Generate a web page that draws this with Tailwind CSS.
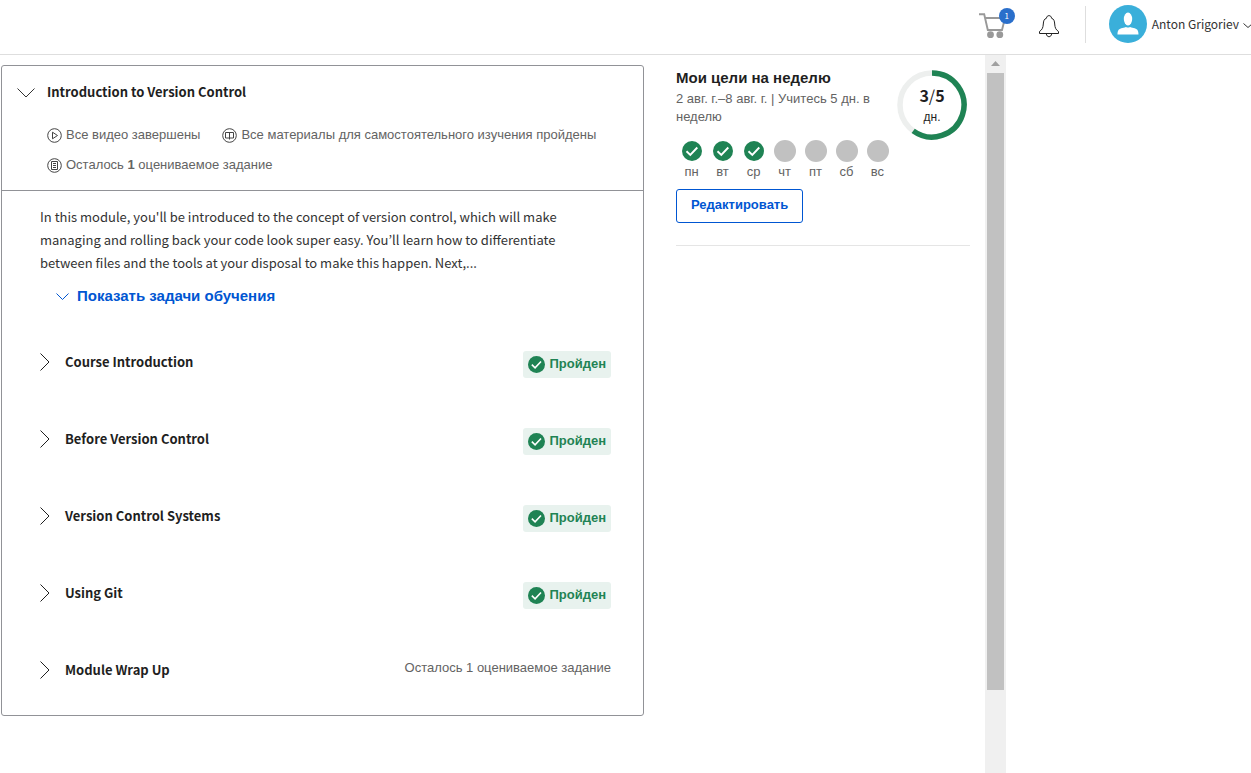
<!DOCTYPE html>
<html lang="ru">
<head>
<meta charset="utf-8">
<meta name="viewport" content="width=device-width, initial-scale=1">
<title>Introduction to Version Control</title>
<script src="https://cdn.jsdelivr.net/npm/@tailwindcss/browser@4"></script>
</head>
<body class="flex h-screen flex-col overflow-hidden bg-white font-['Liberation_Sans','Noto_Sans_CJK_KR',sans-serif] text-[13px] text-[#636363]">
<svg class="hidden" aria-hidden="true">
  <symbol id="check" viewBox="0 0 20 20"><circle cx="10" cy="10" r="10" fill="#1f8354"/><path d="M4.500 10.200l3.800 3.700 7-7.400" fill="none" stroke="#fff" stroke-width="1.900"/></symbol>
  <symbol id="right" viewBox="0 0 10 18"><path d="M.5.5L9 9 .5 17.500" fill="none" stroke="currentColor"/></symbol>
</svg>

<header class="flex h-[55px] shrink-0 items-start justify-end overflow-hidden border-b border-[#dedede]">
  <a href="#cart" aria-label="Корзина" class="relative mt-2 mr-6 h-8 w-9">
    <svg class="mt-1 h-[27px] w-[27px]" viewBox="0 0 27 27"><path d="M0 2.300h5.200l3.600 15.700H23l3-12H6" fill="none" stroke="#999" stroke-width="1.900"/><circle cx="11.500" cy="22.700" r="3.400" fill="#999"/><circle cx="20.800" cy="22.700" r="3.400" fill="#999"/></svg>
    <span class="absolute top-0 left-5 flex size-4 items-center justify-center rounded-full bg-[#2a6fcb] font-['Noto_Sans_CJK_KR',sans-serif] text-[8px] text-white">1</span>
  </a>
  <button type="button" aria-label="Уведомления" class="mt-[15px] mr-[26px]">
    <svg class="h-6 w-5" viewBox="0 0 20 24" fill="none" stroke="#222"><path d="M.5 18.500V16.500C3.500 14.500 4 12.500 4.300 9 4.500 6 5 4 7.500 3.200 7.500 -.2 12.500 -.2 12.500 3.200 15 4 15.500 6 15.700 9 16 12.500 16.500 14.500 19.500 16.500V18.500H.5zM7.300 18.500C7.500 22.800 12.500 22.800 12.700 18.500"/></svg>
  </button>
  <div class="mt-1.5 mr-[23px] h-[37px] w-px bg-[#dedede]"></div>
  <button type="button" class="mt-[5px] -mr-0.5 flex items-center text-[#333]">
    <svg class="size-[38px]" viewBox="0 0 38 38"><circle cx="19" cy="19" r="19" fill="#3aafda"/><ellipse cx="19" cy="14" rx="4.200" ry="6.400" fill="#fff"/><path d="M8.500 29.500c0-4.500 1.500-5.800 5-6.500q2.500-.5 3.500-1 2 1 4 0 1 .5 3.500 1c3.500.7 5 2 5 6.500z" fill="#fff"/></svg>
    <span class="ml-[5px] font-['Noto_Sans_CJK_KR',sans-serif] text-[12px] leading-5">Anton Grigoriev</span>
    <svg class="mt-0.5 ml-1 h-[5px] w-[10px]" viewBox="0 0 10 5" fill="none" stroke="#333"><path d="M.5.5L5 4.500 9.500.5"/></svg>
  </button>
</header>

<div class="mr-[245px] flex min-h-0 flex-1">
  <main class="min-w-0 flex-1 overflow-hidden pt-2.5 pl-px">
    <section class="rounded-[3px] border border-[#919297]">
      <div class="border-b border-[#919297] px-[15px] pt-4 pb-2.5">
        <h2>
          <button type="button" aria-expanded="true" class="flex items-center gap-3 font-['Noto_Sans_CJK_KR',sans-serif] text-[13px] leading-5 font-bold text-[#1f1f1f]">
            <svg class="mt-0.5 h-2.5 w-[18px]" viewBox="0 0 18 10" fill="none" stroke="#333"><path d="M.5.5L9 9 17.500.5"/></svg>Introduction to Version Control
          </button>
        </h2>
        <ul class="mt-[18px] ml-[30px] flex flex-wrap gap-x-[22px]">
          <li class="flex h-[30px] items-center gap-1">
            <svg class="mt-px size-[15px]" viewBox="0 0 15 15" fill="none" stroke="#444"><circle cx="7.500" cy="7.500" r="6.800"/><path d="M5.500 4.200l5 3.300-5 3.300z"/></svg>
            Все видео завершены
          </li>
          <li class="flex h-[30px] items-center gap-1">
            <svg class="mt-px size-[15px]" viewBox="0 0 15 15" fill="none" stroke="#444"><circle cx="7.500" cy="7.500" r="6.800"/><path d="M3.500 4.500h8v5.500h-8zM7.500 4.500v7"/></svg>
            Все материалы для самостоятельного изучения пройдены
          </li>
          <li class="flex h-[30px] items-center gap-1">
            <svg class="mt-px size-[15px]" viewBox="0 0 15 15" fill="none" stroke="#444"><circle cx="7.500" cy="7.500" r="6.800"/><path d="M4.500 3.500h6v8h-6zM6 5.500h3M6 7.500h3M6 9.500h3"/></svg>
            <span>Осталось <b>1</b> оцениваемое задание</span>
          </li>
        </ul>
      </div>
      <div class="pt-[14px] pr-8 pl-[38px]">
        <p class="max-w-[536px] font-['Noto_Sans_CJK_KR',sans-serif] text-[13px] leading-[23px] text-[#333]">In this module, you'll be introduced to the concept of version control, which will make managing and rolling back your code look super easy. You’ll learn how to differentiate between files and the tools at your disposal to make this happen. Next,...</p>
        <button type="button" class="mt-3 ml-4 flex items-center gap-2 text-[15px] leading-5 font-bold text-[#0056d2]"><svg class="h-[7px] w-[13px]" viewBox="0 0 13 7" fill="none" stroke="#0056d2"><path d="M.5.5l6 6 6-6"/></svg>Показать задачи обучения</button>
      </div>
      <ul class="mt-[17px] pr-8 pb-[7px] pl-[38px] [&_button]:flex [&_button]:items-center [&_button]:gap-[15px] [&_li]:flex [&_li]:h-[77px] [&_li]:items-center [&_li]:justify-between">
        <li><button type="button" class="font-['Noto_Sans_CJK_KR',sans-serif] text-[13px] leading-5 font-bold text-[#1f1f1f]"><svg class="h-[18px] w-2.5"><use href="#right"/></svg>Course Introduction</button>
          <span class="mt-1.5 flex h-[27px] items-center gap-1 rounded-[3px] bg-[#e8f2ee] px-[5px] font-bold text-[#1f8354]"><svg class="size-[17px]"><use href="#check"/></svg><span class="pb-0.5">Пройден</span></span></li>
        <li><button type="button" class="font-['Noto_Sans_CJK_KR',sans-serif] text-[13px] leading-5 font-bold text-[#1f1f1f]"><svg class="h-[18px] w-2.5"><use href="#right"/></svg>Before Version Control</button>
          <span class="mt-1.5 flex h-[27px] items-center gap-1 rounded-[3px] bg-[#e8f2ee] px-[5px] font-bold text-[#1f8354]"><svg class="size-[17px]"><use href="#check"/></svg><span class="pb-0.5">Пройден</span></span></li>
        <li><button type="button" class="font-['Noto_Sans_CJK_KR',sans-serif] text-[13px] leading-5 font-bold text-[#1f1f1f]"><svg class="h-[18px] w-2.5"><use href="#right"/></svg>Version Control Systems</button>
          <span class="mt-1.5 flex h-[27px] items-center gap-1 rounded-[3px] bg-[#e8f2ee] px-[5px] font-bold text-[#1f8354]"><svg class="size-[17px]"><use href="#check"/></svg><span class="pb-0.5">Пройден</span></span></li>
        <li><button type="button" class="font-['Noto_Sans_CJK_KR',sans-serif] text-[13px] leading-5 font-bold text-[#1f1f1f]"><svg class="h-[18px] w-2.5"><use href="#right"/></svg>Using Git</button>
          <span class="mt-1.5 flex h-[27px] items-center gap-1 rounded-[3px] bg-[#e8f2ee] px-[5px] font-bold text-[#1f8354]"><svg class="size-[17px]"><use href="#check"/></svg><span class="pb-0.5">Пройден</span></span></li>
        <li><button type="button" class="font-['Noto_Sans_CJK_KR',sans-serif] text-[13px] leading-5 font-bold text-[#1f1f1f]"><svg class="h-[18px] w-2.5"><use href="#right"/></svg>Module Wrap Up</button>
          <span class="pb-1 leading-5">Осталось 1 оцениваемое задание</span></li>
      </ul>
    </section>
  </main>

  <aside class="mr-[15px] ml-8 w-[294px] shrink-0 pt-3">
    <div class="border-b border-[#e5e5e5] pb-[22px]">
      <div class="flex items-start justify-between">
        <div>
          <h3 class="text-[15px] leading-[22px] font-bold text-[#1f1f1f]">Мои цели на неделю</h3>
          <p class="mt-px w-[200px] leading-[18px]">2 авг. г.–8 авг. г. | Учитесь 5 дн. в неделю</p>
          <ol class="mt-3.5 flex [&_li]:flex [&_li]:w-[31px] [&_li]:flex-col [&_li]:items-center [&_li]:gap-px [&_li]:leading-[18px]">
            <li><svg class="size-[22px] p-px"><use href="#check"/></svg>пн</li>
            <li><svg class="size-[22px] p-px"><use href="#check"/></svg>вт</li>
            <li><svg class="size-[22px] p-px"><use href="#check"/></svg>ср</li>
            <li><span class="size-[22px] rounded-full bg-[#c1c1c1]"></span>чт</li>
            <li><span class="size-[22px] rounded-full bg-[#c1c1c1]"></span>пт</li>
            <li><span class="size-[22px] rounded-full bg-[#c1c1c1]"></span>сб</li>
            <li><span class="size-[22px] rounded-full bg-[#c1c1c1]"></span>вс</li>
          </ol>
        </div>
        <div class="mt-[3px] mr-[3px] grid size-[70px] shrink-0 place-items-center *:col-start-1 *:row-start-1">
          <svg class="size-[70px]" viewBox="0 0 70 70" fill="none" stroke-width="5.500"><circle cx="35" cy="35" r="32" stroke="#edefee"/><path d="M35 3A32 32 0 1 1 16.190 60.890" stroke="#1f8354"/></svg>
          <div class="pt-1 text-center text-[#1f1f1f]"><div class="font-['Noto_Sans_CJK_KR',sans-serif] text-[16px] leading-5 font-bold">3<span class="font-normal">/</span>5</div><div class="text-[12px] leading-6">дн.</div></div>
        </div>
      </div>
      <button type="button" class="mt-2 h-[34px] rounded-[3px] border border-[#0056d2] px-3.5 pb-0.5 font-bold text-[#0056d2]">Редактировать</button>
    </div>
  </aside>

  <div class="flex w-[21px] shrink-0 flex-col items-center bg-[#f0f0f0]" aria-hidden="true">
    <svg class="h-[18px] w-[9px]" viewBox="0 0 9 18"><path d="M0 11l4.500-5L9 11z" fill="#a0a0a0"/></svg>
    <div class="h-[86%] w-[17px] bg-[#c1c1c1]"></div>
  </div>
</div>
</body>
</html>
